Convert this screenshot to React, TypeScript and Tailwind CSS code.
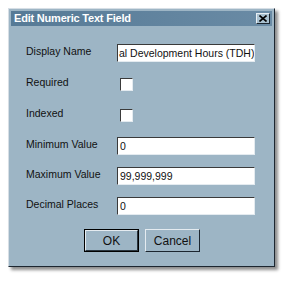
import React from 'react';

const sunken = 'border border-t-[#3a3a3a] border-l-[#3a3a3a] border-b-[#e4ebf0] border-r-[#e4ebf0] bg-white';

function Row({ label, children, className }: { label: string; children: React.ReactNode; className: string }) {
  return (
    <div className={`flex items-center ${className}`}>
      <span className="w-[91px] shrink-0 mb-1">{label}</span>
      {children}
    </div>
  );
}

export default function App() {
  return (
    <div className="w-[289px] h-[281px] bg-white pt-[8px] pl-[8px] overflow-hidden" style={{ fontFamily: '"Liberation Sans", Arial, sans-serif' }}>
      <div className="w-[267px] h-[259px] bg-[#9db5c5] border border-t-[#d6dee5] border-l-[#d6dee5] border-b-[#1c2630] border-r-[#1c2630] shadow-[3px_3px_3px_rgba(0,0,0,0.45)] flex flex-col p-[2px]">
        {/* Title bar */}
        <div className="h-[15px] bg-gradient-to-r from-[#567a96] to-[#6a8ba5] flex items-center justify-between pl-[3px] pr-[2px]">
          <span className="text-white font-bold text-[11px] leading-none tracking-[-0.2px]">Edit Numeric Text Field</span>
          <div className="w-[14px] h-[11px] bg-[#a9c1d0] border border-t-[#e8eff4] border-l-[#e8eff4] border-b-[#1c2630] border-r-[#1c2630] flex items-center justify-center">
            <svg width="8" height="7" viewBox="0 0 8 7">
              <path d="M0.5 0.5 L7.5 6.5 M7.5 0.5 L0.5 6.5" stroke="#000" strokeWidth="1.6" />
            </svg>
          </div>
        </div>

        {/* Body */}
        <div className="flex flex-col pl-[15px] text-[10.5px] text-[#111] leading-none">
          <Row label="Display Name" className="mt-[18px] h-[18px]">
            <div className={`w-[138px] h-[18px] ${sunken} flex items-center overflow-hidden whitespace-nowrap`}>
              <span className="pl-[1px]">al Development Hours (TDH)</span>
            </div>
          </Row>
          <Row label="Required" className="mt-[16px] h-[13px]">
            <div className={`ml-[3px] w-[13px] h-[13px] ${sunken}`} />
          </Row>
          <Row label="Indexed" className="mt-[18px] h-[13px]">
            <div className={`ml-[3px] w-[13px] h-[13px] ${sunken}`} />
          </Row>
          <Row label="Minimum Value" className="mt-[15px] h-[18px]">
            <div className={`w-[138px] h-[18px] ${sunken} flex items-center pl-[2px]`}>0</div>
          </Row>
          <Row label="Maximum Value" className="mt-[12px] h-[18px]">
            <div className={`w-[138px] h-[18px] ${sunken} flex items-center pl-[2px]`}>99,999,999</div>
          </Row>
          <Row label="Decimal Places" className="mt-[12px] h-[18px]">
            <div className={`w-[138px] h-[18px] ${sunken} flex items-center pl-[2px]`}>0</div>
          </Row>

          <div className="flex gap-[6px] mt-[14px] ml-[58px]">
            <div className="w-[55px] h-[23px] border border-black">
              <div className="w-full h-full bg-[#9db5c5] border border-t-[#e4ebf0] border-l-[#e4ebf0] border-b-[#2a3640] border-r-[#2a3640] flex items-center justify-center text-[12px]">
                OK
              </div>
            </div>
            <div className="w-[55px] h-[23px] bg-[#9db5c5] border border-t-[#e4ebf0] border-l-[#e4ebf0] border-b-[#1c2630] border-r-[#1c2630] flex items-center justify-center text-[12px]">
              Cancel
            </div>
          </div>
        </div>
      </div>
    </div>
  );
}
